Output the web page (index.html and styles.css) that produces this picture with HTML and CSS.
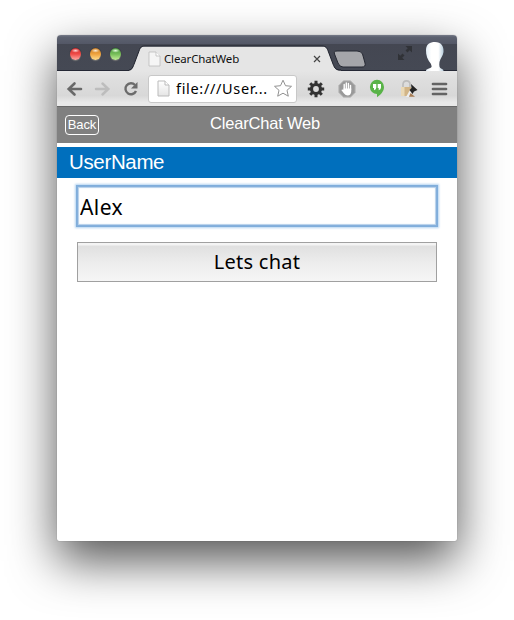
FILE: index.html
```html
<!DOCTYPE html>
<html lang="en">
<head>
<meta charset="utf-8">
<title>ClearChatWeb</title>
<link rel="stylesheet" href="styles.css">
</head>
<body>
<div class="window">
  <header class="titlebar">
    <div class="lights"><i class="light red"></i><i class="light amber"></i><i class="light green"></i></div>
    <div class="tab">
      <svg class="tab-shape" width="212" height="26" viewBox="0 0 212 26"><path d="M0 25.500C3 25.500 4 22 5.500 18L10 6C11.500 2.500 12.500 1.500 16 1.500H193C197 1.500 198 3 199.500 7L204 19C206 24 207 25.500 212 25.500V26H0Z" fill="#e5e5e5"/><path d="M0 25C3 25 4 22 5.500 18L10 6C11.500 2 12.500 1 16 1H193C197 1 198 3 199.500 7L204 19C206 24 207 25 212 25" fill="none" stroke="#1f222d"/></svg>
      <svg class="page" width="13" height="16" viewBox="0 0 13 16"><path d="M1 1H8L12 5V15H1Z" fill="#f5f5f5" stroke="#bbb" stroke-width=".8"/><path d="M8 1V5H12" fill="#fff" stroke="#bbb" stroke-width=".8"/></svg>
      <span class="tab-title">ClearChatWeb</span>
      <svg class="close" width="8" height="8" viewBox="0 0 8 8"><path d="M1 1L7 7M7 1L1 7" stroke="#444" stroke-width="1.200"/></svg>
    </div>
    <svg class="newtab" width="34" height="18" viewBox="0 0 34 18"><path d="M4 1H24Q28 1 29.500 4L32 13Q33 17 29 17H10Q6.500 17 5 13L1.500 4Q.5 1 4 1Z" fill="#a5a6aa" stroke="#252832"/></svg>
    <svg class="expand" width="16" height="16" viewBox="0 0 16 16"><path d="M8.500 1H15V7.500L12.700 5.200L10.500 7.500L8.500 5.500L10.800 3.300ZM1 8.500L3.300 10.800L5.500 8.500L7.500 10.500L5.200 12.800L7.500 15H1Z" fill="#303237"/></svg>
    <svg class="avatar" width="20" height="30" viewBox="0 0 20 30"><defs><linearGradient id="face"><stop offset="0" stop-color="#e2edf5"/><stop offset=".3" stop-color="#fff"/><stop offset=".7" stop-color="#fff"/><stop offset="1" stop-color="#b7cddd"/></linearGradient></defs><path d="M1 30C1 27.500 5 28 6.500 26C7 25 6 24 6 23C2.500 19 .8 14 1 9C1.200 3 5 1 10 1C16 1 19 5 18.500 11C18 15 15.500 17 14.500 21C14 25 14.500 26.500 16 27.500C17.500 28.500 18.500 28.500 18.500 30Z" fill="url(#face)"/></svg>
  </header>
  <nav class="toolbar">
    <svg width="17" height="16" viewBox="0 0 17 16"><path d="M15 8H3M8.500 2.500L2.700 8L8.500 13.500" fill="none" stroke="#696969" stroke-width="2.600" stroke-linecap="round"/></svg>
    <svg class="forward" width="17" height="16" viewBox="0 0 17 16"><path d="M2 8H14M8.500 2.500L14.300 8L8.500 13.500" fill="none" stroke="#bdbdbd" stroke-width="2.500" stroke-linecap="round"/></svg>
    <svg class="reload" width="16" height="16" viewBox="0 0 16 16"><path d="M12 4A5.500 5.500 0 1 0 13 10" fill="none" stroke="#6b6b6b" stroke-width="2.400"/><path d="M14.500 1V7.500H8Z" fill="#6b6b6b"/></svg>
    <div class="address">
      <svg width="13" height="17" viewBox="0 0 13 17"><defs><linearGradient id="sheet" x2="0" y2="1"><stop stop-color="#fff"/><stop offset="1" stop-color="#e5e5e5"/></linearGradient></defs><path d="M1 1H8L12 5V16H1Z" fill="url(#sheet)" stroke="#bbb"/><path d="M8 1V5H12" fill="#fff" stroke="#bbb"/></svg>
      <span class="url">file:///User...</span>
      <svg class="star" width="20" height="19" viewBox="0 0 20 19"><path d="M10 1.200L12.500 6.700L18.500 7.300L14 11.300L15.300 17.200L10 14.200L4.700 17.200L6 11.300L1.500 7.300L7.500 6.700Z" fill="#fff" stroke="#929292" stroke-linejoin="round"/></svg>
    </div>
    <svg class="gear" width="18" height="18" viewBox="0 0 18 18"><circle cx="9" cy="9" r="4.500" fill="none" stroke="#333" stroke-width="3.200"/><path d="M9 .8V4M9 14V17.200M.8 9H4M14 9H17.200M3.200 3.200L5.500 5.500M12.500 12.500L14.800 14.800M3.200 14.800L5.500 12.500M12.500 5.500L14.800 3.200" stroke="#333" stroke-width="3"/></svg>
    <svg class="hand" width="18" height="18" viewBox="0 0 18 18"><path d="M5.500 .8H12.500L17.200 5.500V12.500L12.500 17.200H5.500L.8 12.500V5.500Z" fill="#999" stroke="#bbb"/><path d="M6.200 10V4.500M8.300 9V3M10.400 9V3.500M12.500 10V5.500" stroke="#fff" stroke-width="1.400" stroke-linecap="round"/><path d="M5.500 8.500H13.200V12Q12.500 15.500 9.800 15.500Q7.500 15.500 6 13.500L3.300 10Q4.500 8.800 5.500 10Z" fill="#fff"/></svg>
    <svg class="hangouts" width="16" height="19" viewBox="0 0 16 19"><path d="M8 .8A7 7 0 0 1 15 8C15 12.500 11.500 16 8 18.200V15A7 7 0 1 1 8 .8Z" fill="#59b348"/><path d="M4 5H7.300V8.500Q7.300 10.700 5 11.300V9H4ZM8.700 5H12V8.500Q12 10.700 9.700 11.300V9H8.700Z" fill="#fff"/></svg>
    <svg class="lock" width="18" height="19" viewBox="0 0 18 19"><path d="M3 9V5.500Q3 1.800 6.500 1.800Q10 1.800 10 5.500V9" fill="none" stroke="#bcbcbc" stroke-width="1.700"/><path d="M1 8H11V17H1Z" fill="#d2b587"/><path d="M1 8H4.500V17H1Z" fill="#ead9b6"/><path d="M6 18L10.500 10L13 12L9 18Z" fill="#eee"/><path d="M11 5L17.500 11L14 12.500L12.500 15L9.500 11L11.500 9Z" fill="#222"/><path d="M10.500 14L15 17.800H9Z" fill="#a77d55"/></svg>
    <svg class="menu" width="17" height="14" viewBox="0 0 17 14"><path d="M2 2H15M2 7H15M2 12H15" stroke="#646464" stroke-width="2.700" stroke-linecap="round"/></svg>
  </nav>
  <main>
    <div class="appbar"><span class="back">Back</span><h1>ClearChat Web</h1></div>
    <h2>UserName</h2>
    <form class="login"><input type="text" value="Alex" aria-label="UserName"><button type="button">Lets chat</button></form>
  </main>
</div>
</body>
</html>
```
FILE: styles.css
```css
* { box-sizing: border-box; }
body { margin: 0; padding: 35px 57px 0; height: 620px; overflow: hidden; background: #fff; font-family: "Liberation Sans", sans-serif; }
svg { display: block; flex: none; }
.window { width: 400px; height: 506px; background: #fff; border-radius: 4px 4px 2px 2px; box-shadow: 0 0 1px rgba(0,0,0,.45), 0 20px 48px rgba(0,0,0,.67); }
.titlebar { display: flex; height: 36px; border-radius: 4px 4px 0 0; border-bottom: 1px solid #252835; background: linear-gradient(#777b89 0, #5d6270 2px, #535766 9px, #444752 9px, #454954 100%); }
.lights { display: flex; gap: 9px; padding: 13px 0 0 12.500px; width: 73px; flex: none; }
.light { width: 11px; height: 12px; border-radius: 50%; box-shadow: 0 1px 1px #777, 0 0 1px #111; }
.red { background: radial-gradient(ellipse 4px 2px at 50% 22%, #ffdada, transparent), linear-gradient(#cf2f2f, #ef4947 50%, #ffaca6); }
.amber { background: radial-gradient(ellipse 4px 2px at 50% 22%, #fff0da, transparent), linear-gradient(#c47b27, #efa23d 50%, #ffdf91); }
.green { background: radial-gradient(ellipse 4px 2px at 50% 22%, #e9ffe2, transparent), linear-gradient(#4c9642, #75bd58 50%, #c4ee99); }
.tab { position: relative; display: flex; width: 204px; height: 26px; margin-top: 11px; padding-left: 18px; flex: none; }
.tab-shape { position: absolute; left: 0; top: -1px; }
.tab > :not(.tab-shape) { position: relative; }
.tab > .tab-shape { left: -1px; }
.page { margin-top: 5px; }
.tab-title { margin: 5px 0 0 3px; width: 143px; font: 11.500px/16px "Noto Sans", sans-serif; letter-spacing: -.15px; color: #111; }
.close { margin: 9px 0 0 6px; }
.newtab { margin: 15px 0 0 -1px; position: relative; }
.expand { margin: 10px 0 0 30px; }
.avatar { margin: 6px 0 0 12px; }
.toolbar { display: flex; align-items: center; height: 36px; padding: 0 0 0 9px; background: linear-gradient(#e5e5e5, #dedede 25%, #d8d8d8 70%, #e9e9e9 90%); border-bottom: 1px solid #686868; }
.forward { margin-left: 11px; }
.reload { margin-left: 12px; }
.address { display: flex; align-items: center; width: 149px; height: 28px; margin-left: 9px; padding-left: 8px; flex: none; background: #fff; border: 1px solid #c8c8c8; border-radius: 3px; }
.url { width: 93px; margin-left: 6px; font: 14.500px/22px "Noto Sans", sans-serif; letter-spacing: .67px; color: #000; white-space: nowrap; position: relative; top: -1px; }
.star { margin-left: 4px; }
.gear { margin-left: 10px; }
.hand { margin-left: 13px; }
.hangouts { margin-left: 13px; }
.lock { margin-left: 15px; }
.menu { margin-left: 13px; }
.appbar { position: relative; height: 36px; background: #808080; color: #fff; }
.back { position: absolute; left: 8px; top: 8px; width: 34px; height: 20px; border: 1px solid #fff; border-radius: 4px; text-align: center; font-size: 13px; line-height: 18px; letter-spacing: -.1px; }
h1 { margin: 0; padding: 0 0 0 16px; font-size: 16.500px; line-height: 33px; font-weight: 400; text-align: center; letter-spacing: -.2px; }
h2 { height: 31px; margin: 4px 0 0; padding-left: 12px; background: #006fbd; color: #fff; font-size: 20.500px; line-height: 30px; font-weight: 400; letter-spacing: -.35px; }
.login { display: flex; flex-direction: column; padding: 8px 20px 0; }
input { width: 360px; height: 40px; padding: 1px 2px 0; border: 1px solid #86b0dc; outline: none; background: #fff; box-shadow: 0 0 0 1px #80aedb, 0 0 2px 2px #b5d4f0, inset 0 0 1px 1px #b5d0ea; font: 21px "Noto Sans", sans-serif; letter-spacing: .4px; color: #000; }
button { height: 40px; margin-top: 16px; padding: 0 0 2px; border: 1px solid #a0a0a0; background: linear-gradient(#f4f4f4 0 2px, #e0e0e0 3px, #ececec 50%, #f6f6f6); font: 20px "Noto Sans", sans-serif; letter-spacing: .25px; color: #000; }
```
